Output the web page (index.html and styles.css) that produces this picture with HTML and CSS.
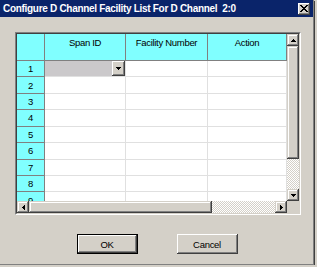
FILE: index.html
```html
<!DOCTYPE html>
<html lang="en">

<head>
    <meta charset="UTF-8">
    <title>Configure D Channel Facility List</title>
    <link rel="stylesheet" href="styles.css">
</head>

<body>

    <div class="window">
        <!-- Title bar -->
        <div class="titlebar">
            <span class="title">Configure D Channel Facility List For D Channel&nbsp; 2:0</span>
            <div class="close-btn">
                <svg width="8" height="7" viewBox="0 0 8 7" shape-rendering="crispEdges"><path d="M0 0h2v1H0zM6 0h2v1H6zM1 1h2v1H1zM5 1h2v1H5zM2 2h4v1H2zM3 3h2v1H3zM2 4h4v1H2zM1 5h2v1H1zM5 5h2v1H5zM0 6h2v1H0zM6 6h2v1H6z"/></svg>
            </div>
        </div>

        <!-- Grid -->
        <div class="grid-box">
            <div class="grid-inner">
                <div class="grid-main">
                    <div class="cells">
                        <div class="head-cell"></div>
                        <div class="head-cell">Span ID</div>
                        <div class="head-cell">Facility Number</div>
                        <div class="head-cell">Action</div>

                        <div class="row-head">1</div>
                        <div class="cell combo">
                            <div class="combo-btn">
                                <svg width="5" height="3" viewBox="0 0 5 3" shape-rendering="crispEdges"><path d="M0 0h5v1H0zM1 1h3v1H1zM2 2h1v1H2z"/></svg>
                            </div>
                        </div>
                        <div class="cell"></div>
                        <div class="cell"></div>

                        <div class="row-head">2</div>
                        <div class="cell"></div>
                        <div class="cell"></div>
                        <div class="cell"></div>

                        <div class="row-head">3</div>
                        <div class="cell"></div>
                        <div class="cell"></div>
                        <div class="cell"></div>

                        <div class="row-head">4</div>
                        <div class="cell"></div>
                        <div class="cell"></div>
                        <div class="cell"></div>

                        <div class="row-head">5</div>
                        <div class="cell"></div>
                        <div class="cell"></div>
                        <div class="cell"></div>

                        <div class="row-head">6</div>
                        <div class="cell"></div>
                        <div class="cell"></div>
                        <div class="cell"></div>

                        <div class="row-head">7</div>
                        <div class="cell"></div>
                        <div class="cell"></div>
                        <div class="cell"></div>

                        <div class="row-head">8</div>
                        <div class="cell"></div>
                        <div class="cell"></div>
                        <div class="cell"></div>

                        <div class="row-head">9</div>
                        <div class="cell"></div>
                        <div class="cell"></div>
                        <div class="cell"></div>
                    </div>

                    <!-- Vertical scrollbar -->
                    <div class="vscroll">
                        <div class="sb-btn">
                            <svg width="5" height="3" viewBox="0 0 5 3" shape-rendering="crispEdges"><path d="M2 0h1v1H2zM1 1h3v1H1zM0 2h5v1H0z"/></svg>
                        </div>
                        <div class="sb-thumb v-thumb"></div>
                        <div class="sb-track"></div>
                        <div class="sb-btn">
                            <svg width="5" height="3" viewBox="0 0 5 3" shape-rendering="crispEdges"><path d="M0 0h5v1H0zM1 1h3v1H1zM2 2h1v1H2z"/></svg>
                        </div>
                    </div>
                </div>

                <!-- Horizontal scrollbar -->
                <div class="hscroll-row">
                    <div class="hscroll">
                        <div class="sb-btn">
                            <svg width="3" height="5" viewBox="0 0 3 5" shape-rendering="crispEdges"><path d="M2 0h1v5H2zM1 1h1v3H1zM0 2h1v1H0z"/></svg>
                        </div>
                        <div class="sb-thumb h-thumb"></div>
                        <div class="sb-track"></div>
                        <div class="sb-btn">
                            <svg width="3" height="5" viewBox="0 0 3 5" shape-rendering="crispEdges"><path d="M0 0h1v5H0zM1 1h1v3H1zM2 2h1v1H2z"/></svg>
                        </div>
                    </div>
                    <div class="corner"></div>
                </div>
            </div>
        </div>

        <!-- Buttons -->
        <div class="buttons">
            <div class="btn btn-default">OK</div>
            <div class="btn">Cancel</div>
        </div>
    </div>

</body>

</html>
```

FILE: styles.css
```css
body {
    margin: 0;
    background-color: #d4d0c8;
    font-family: 'Liberation Sans', Arial, sans-serif;
    font-size: 9.5px;
    letter-spacing: -0.3px;
    color: #000;
}

.window {
    width: 313px;
    height: 264px;
    background-color: #d4d0c8;
    border-right: 1px solid #808080;
    border-bottom: 1px solid #808080;
    box-shadow: 1px 1px 0 #404040;
}

/* Title bar */
.titlebar {
    height: 17px;
    background-color: #0a246a;
    color: #fff;
    display: flex;
    align-items: center;
    justify-content: space-between;
    padding: 0 3px 0 3px;
}

.title {
    font-weight: 700;
    font-size: 10px;
    letter-spacing: -0.3px;
}

.close-btn {
    width: 12px;
    height: 12px;
    background-color: #d4d0c8;
    box-shadow: inset -1px -1px #404040, inset 1px 1px #fff, inset -2px -2px #808080;
    display: flex;
    align-items: center;
    justify-content: center;
}

/* Grid */
.grid-box {
    margin: 15px 0 0 15px;
    width: 284px;
    border: 1px solid;
    border-color: #808080 #fff #fff #808080;
}

.grid-inner {
    border: 1px solid;
    border-color: #404040 #d4d0c8 #d4d0c8 #404040;
}

.grid-main {
    display: flex;
    height: 167px;
}

.cells {
    width: 270px;
    overflow: hidden;
    background-color: #fff;
    display: grid;
    grid-template-columns: 28px 81px 82px 79px;
    grid-template-rows: 27px;
    grid-auto-rows: 16.43px;
}

.head-cell,
.row-head,
.cell {
    box-sizing: border-box;
    border-right: 1px solid #e0e0e0;
    border-bottom: 1px solid #e0e0e0;
}

.head-cell {
    background-color: #80ffff;
    border-color: #808080;
    text-align: center;
    padding-top: 3px;
}

.row-head {
    background-color: #80ffff;
    border-color: #808080;
    display: flex;
    align-items: center;
    justify-content: center;
}

.combo {
    background-color: #cbc9cb;
    display: flex;
    justify-content: flex-end;
}

.combo-btn {
    width: 13px;
    background-color: #d4d0c8;
    box-shadow: inset -1px -1px #404040, inset 1px 1px #fff, inset -2px -2px #808080;
    display: flex;
    align-items: center;
    justify-content: center;
}

/* Scrollbars */
.vscroll {
    width: 12px;
    display: flex;
    flex-direction: column;
}

.sb-btn {
    width: 12px;
    height: 12px;
    flex-shrink: 0;
    background-color: #d4d0c8;
    box-shadow: inset -1px -1px #404040, inset 1px 1px #d4d0c8, inset -2px -2px #808080, inset 2px 2px #fff;
    display: flex;
    align-items: center;
    justify-content: center;
}

.sb-thumb {
    flex-shrink: 0;
    background-color: #d4d0c8;
    box-shadow: inset -1px -1px #404040, inset 1px 1px #d4d0c8, inset -2px -2px #808080, inset 2px 2px #fff;
}

.v-thumb {
    height: 113px;
}

.h-thumb {
    width: 183px;
}

.sb-track {
    flex: 1;
    background: repeating-conic-gradient(#fff 0 25%, #d4d0c8 0 50%) 0 0 / 2px 2px;
}

.hscroll-row {
    display: flex;
    height: 12px;
}

.hscroll {
    width: 270px;
    display: flex;
}

.corner {
    flex: 1;
    background-color: #d4d0c8;
}

/* Buttons */
.buttons {
    display: flex;
    justify-content: center;
    gap: 39px;
    margin-top: 19px;
    padding-left: 1px;
}

.btn {
    box-sizing: border-box;
    width: 61px;
    height: 20px;
    background-color: #d4d0c8;
    box-shadow: inset -1px -1px #404040, inset 1px 1px #fff, inset -2px -2px #808080;
    display: flex;
    align-items: center;
    justify-content: center;
}

.btn-default {
    border: 1px solid #000;
}
```
